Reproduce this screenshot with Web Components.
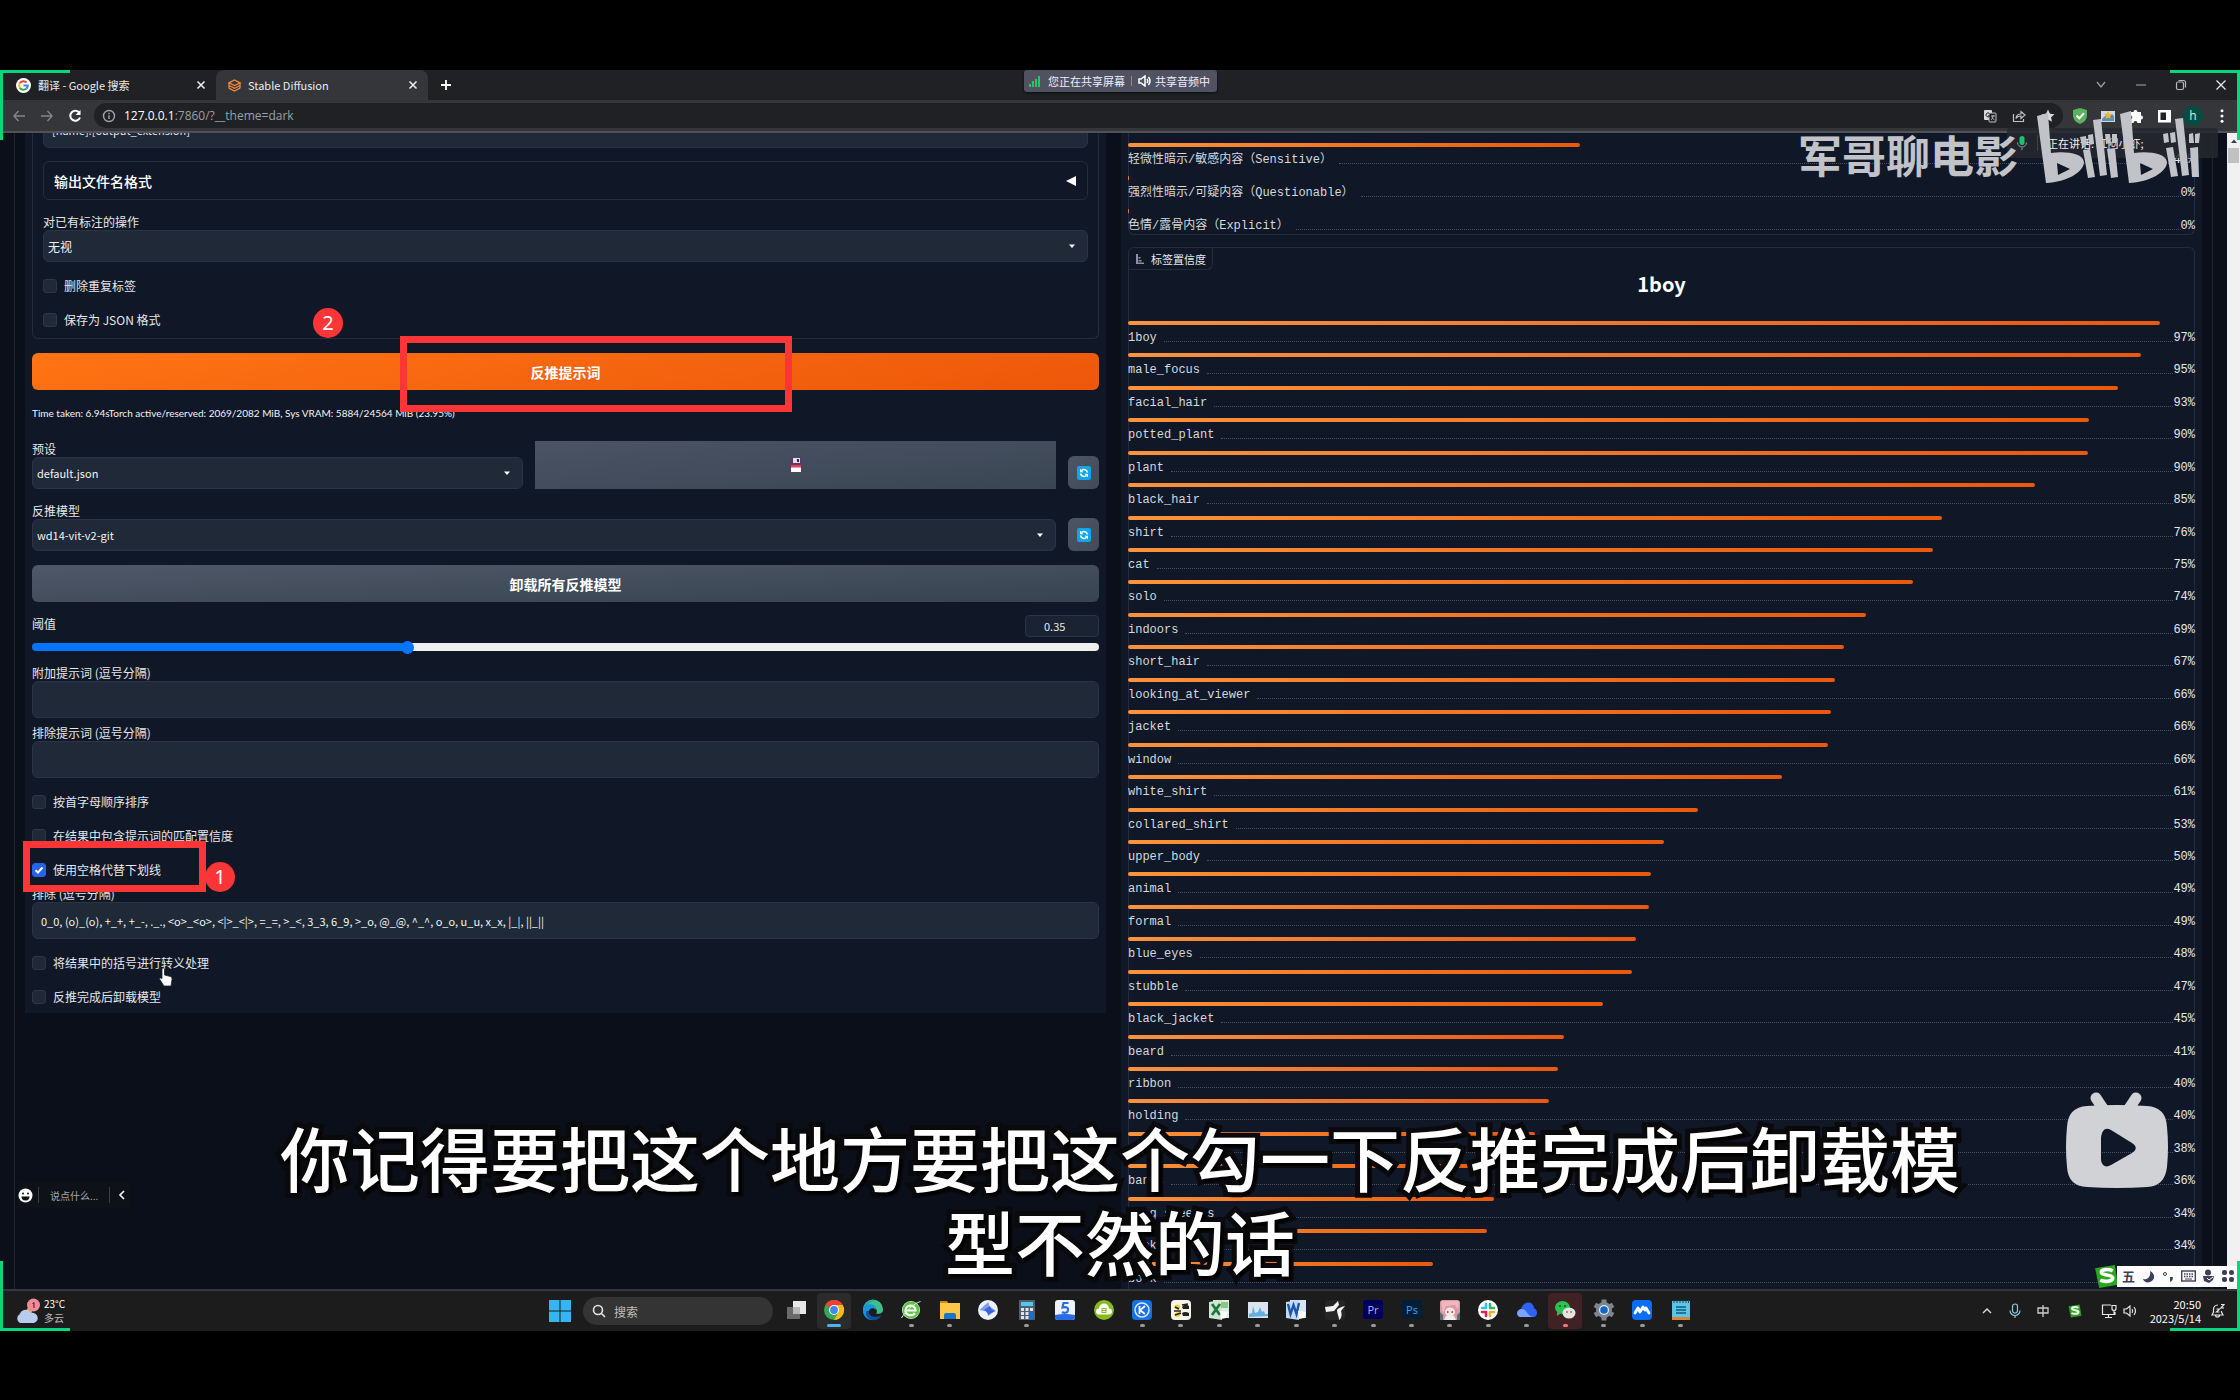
<!DOCTYPE html>
<html lang="zh-CN">
<head>
<meta charset="utf-8">
<title>Stable Diffusion</title>
<style>
html,body{height:100%;margin:0;background:#000}
body{font-family:"Noto Sans CJK SC","Noto Sans",sans-serif;font-size:12px;color:#e5e7eb}
</style>
</head>
<body>
<shared-desktop></shared-desktop>
<script>
const base = `*{box-sizing:border-box}button,input,select{font:inherit;color:inherit;margin:0}button{cursor:pointer;border:0;background:none;padding:0}svg{display:block;flex:none}`;
function define(name, css, html){
  customElements.define(name, class extends HTMLElement{
    connectedCallback(){
      if(this.shadowRoot) return;
      const root = this.attachShadow({mode:'open'});
      root.innerHTML = `<style>${base}${css}</style>` + (typeof html === 'function' ? html(this) : html);
    }
  });
}
let uid = 0;

/* ---------- browser chrome ---------- */
define('browser-tab', `
:host{display:flex;align-items:center;height:30px;width:212px;padding:0 8px 0 12px;gap:7px;color:#e8eaed;font:11px/16px "Noto Sans CJK SC",sans-serif}
:host([active]){background:#35363a;border-radius:8px 8px 0 0}
span{flex:1;white-space:nowrap}
button{width:14px;height:14px}`,
`<slot name="icon"></slot><span><slot></slot></span><button aria-label="关闭标签页"><svg width="14" height="14" viewBox="0 0 14 14" stroke="#e8eaed" stroke-width="1.6"><path d="M3.5 3.5l7 7M10.500 3.500l-7 7"/></svg></button>`);

define('browser-tabs', `
:host{display:flex;align-items:center;height:30px;background:#202124;padding-left:4px}
.win{margin-left:auto;display:flex;gap:24px;padding-right:11px}
.new{width:16px;height:16px;margin-left:10px}`,
`<browser-tab>翻译 - Google 搜索<svg slot="icon" width="15" height="15" viewBox="0 0 15 15"><circle cx="7.500" cy="7.500" r="7.500" fill="#fff"/><g fill="none" stroke-width="2"><path d="M3.800 5.300A4.300 4.300 0 0 1 10.600 4.500" stroke="#ea4335"/><path d="M3.800 5.300A4.300 4.300 0 0 0 3.800 9.700" stroke="#fbbc05"/><path d="M3.800 9.700A4.300 4.300 0 0 0 10.400 10.600" stroke="#34a853"/><path d="M7.500 7.500h4.300a4.300 4.300 0 0 1-1.400 3.100" stroke="#4285f4"/></g></svg></browser-tab>
<browser-tab active>Stable Diffusion<svg slot="icon" width="13" height="13" viewBox="0 0 13 13" fill="none" stroke="#f08a3c" stroke-width="1.300"><path d="M6.500 1L12 3.800 6.500 6.600 1 3.800zM1 6.500l5.500 2.800L12 6.500M1 9.200L6.500 12 12 9.200M1 3.800v5.400M12 3.800v5.400"/></svg></browser-tab>
<button class="new" aria-label="新标签页"><svg width="16" height="16" viewBox="0 0 16 16" stroke="#fff" stroke-width="1.800"><path d="M8 3v10M3 8h10"/></svg></button>
<div class="win">
<button aria-label="搜索标签页"><svg width="16" height="16" viewBox="0 0 16 16" fill="none" stroke="#9a9b9e" stroke-width="1.400"><path d="M4 5l4 5 4-5"/></svg></button>
<button aria-label="最小化"><svg width="16" height="16" viewBox="0 0 16 16" stroke="#aaa"><path d="M3 8h10"/></svg></button>
<button aria-label="还原"><svg width="16" height="16" viewBox="0 0 16 16" fill="none" stroke="#b8b8b8" stroke-width="1.200"><rect x="3.500" y="5" width="7" height="7.500" rx="1.500"/><path d="M5.500 3.500h5a2 2 0 0 1 2 2v5"/></svg></button>
<button aria-label="关闭"><svg width="16" height="16" viewBox="0 0 16 16" stroke="#e8e8e8" stroke-width="1.300"><path d="M3.500 3.500l9 9M12.500 3.500l-9 9"/></svg></button>
</div>`);

define('browser-toolbar', `
:host{display:flex;align-items:center;height:33px;background:#35363a;border-bottom:2px solid #505257;padding:0 9px 0 11px}
.nav{display:flex;gap:12px;margin-right:11px}
.bar{flex:1;height:25px;border-radius:13px;background:#202124;display:flex;align-items:center;padding:0 7px 0 8px;gap:8px;font:12px/16px "Open Sans","Noto Sans",sans-serif}
.url{flex:1;color:#9aa0a6;white-space:nowrap}
.url b{color:#fff;font-weight:400}
.ic{display:flex;gap:13px}
.ext{display:flex;align-items:center;gap:10px;margin-left:8px}
.me{width:20px;height:20px;border-radius:50%;background:#024f41;color:#e8e8e8;font:12px/20px "Open Sans",sans-serif;text-align:center}`,
`<div class="nav">
<button aria-label="后退"><svg width="16" height="16" viewBox="0 0 16 16" fill="none" stroke="#85868a" stroke-width="1.400"><path d="M14 8H3M7.500 3L3 8l4.500 5"/></svg></button>
<button aria-label="前进"><svg width="16" height="16" viewBox="0 0 16 16" fill="none" stroke="#85868a" stroke-width="1.400"><path d="M2 8h11M8.500 3L13 8l-4.500 5"/></svg></button>
<button aria-label="刷新"><svg width="16" height="16" viewBox="0 0 16 16" fill="none" stroke="#fff" stroke-width="2"><path d="M12.500 5A5 5 0 1 0 13 9.500"/><path d="M13.500 2v5h-5z" fill="#fff" stroke="none"/></svg></button></div>
<div class="bar"><svg width="14" height="14" viewBox="0 0 14 14" fill="none" stroke="#a0a3a8" stroke-width="1.400"><circle cx="7" cy="7" r="5.500"/><path d="M7 6.200V10M7 3.800v1.400"/></svg>
<span class="url"><b>127.0.0.1</b>:7860/?__theme=dark</span>
<div class="ic">
<svg width="16" height="16" viewBox="0 0 16 16"><rect x="2" y="2" width="8" height="10" rx="1" fill="#d8dadd"/><rect x="7" y="5" width="7" height="9" rx="1" fill="#202124" stroke="#c0c2c6"/><path d="M7.500 5.500a2 2 0 1 0 .3 2.300H6" fill="none" stroke="#202124"/><path d="M9 8h4M11 7v1c0 2-1 3-2 4M10 9c.5 1.500 1.500 2.500 2.500 3" fill="none" stroke="#c0c2c6" stroke-width=".9"/></svg>
<svg width="16" height="16" viewBox="0 0 16 16" fill="none" stroke="#c0c2c6" stroke-width="1.200"><path d="M2.500 6v7.500h10V11"/><path d="M5 10.500c.3-3 2-4.500 5-4.500V3.500L14 7l-4 3.500V8c-2.500 0-4 .8-5 2.500z"/></svg>
<svg width="16" height="16" viewBox="0 0 16 16" fill="#d9dadc"><path d="M8 1.500l1.900 4.200 4.600.5-3.400 3.100.9 4.500L8 11.500l-4 2.300.9-4.500L1.500 6.200l4.600-.5z"/></svg></div></div>
<div class="ext">
<svg width="18" height="18" viewBox="0 0 18 18"><path d="M9 1l7 2v5c0 4.500-3 7.500-7 9-4-1.500-7-4.500-7-9V3z" fill="#58b35c"/><path d="M5.500 8.500l2.800 2.800 4.700-5" fill="none" stroke="#fff" stroke-width="2"/></svg>
<svg width="18" height="18" viewBox="0 0 18 18"><rect x="2" y="4" width="14" height="11" fill="#cfd9e3"/><path d="M3 12l4-4 3 2 3-3 2 2v5H3z" fill="#5f8fae"/><path d="M9 4l1.200 2.600 2.800.4-2 2 .5 2.800L9 10.500l-2.500 1.300.5-2.800-2-2 2.800-.4z" fill="#f3b62b"/></svg>
<svg width="18" height="18" viewBox="0 0 18 18" fill="#fff"><path d="M3 5h3.500a2 2 0 1 1 4 0H14v3.500a2 2 0 1 1 0 4V16h-3.500a2 2 0 1 0-4 0H3v-3.800a1.900 1.900 0 1 0 0-3.700z"/></svg>
<svg width="18" height="18" viewBox="0 0 18 18"><path d="M3 3h13v12.500H3z" fill="#fff"/><path d="M5.500 5.500h5.500v7.500H5.500z" fill="#202124"/></svg>
<div class="me">h</div>
<svg width="18" height="18" viewBox="0 0 18 18" fill="#fff"><circle cx="9" cy="3.800" r="1.500"/><circle cx="9" cy="9" r="1.500"/><circle cx="9" cy="14.200" r="1.500"/></svg></div>`);

/* ---------- form parts ---------- */
define('form-select', `
:host{display:block}
label{display:block;height:16px;line-height:16px;white-space:nowrap}
.box{position:relative}
select{display:block;width:100%;height:32px;appearance:none;border:1px solid #293446;border-radius:6px;background:#1f2937;padding:0 4px;color:#f3f4f6;font-size:11px}
:host(:lang(zh-Hans)) select{font-size:12px}
svg{position:absolute;right:12px;top:12px;pointer-events:none}`,
e=>{const id='s'+(++uid);return `<label for="${id}">${e.getAttribute('label')}</label><div class="box"><select id="${id}"><option>${e.getAttribute('value')}</option></select><svg width="8" height="8" viewBox="0 0 8 8" fill="#fff"><path d="M1 2.500h6L4 6z"/></svg></div>`});

define('form-text', `
:host{display:block}
label{display:block;height:16px;line-height:16px;white-space:nowrap}
input{display:block;width:100%;height:37px;border:1px solid #293446;border-radius:6px;background:#1f2937;padding:0 8px;color:#f3f4f6;font-size:11px;outline:0}`,
e=>{const id='t'+(++uid);return `<label for="${id}">${e.getAttribute('label')}</label><input type="text" id="${id}" value="${(e.getAttribute('value')||'').replace(/</g,'&lt;')}">`});

define('form-check', `
:host{display:flex}
label{display:flex;align-items:center;gap:7px;height:16px;line-height:16px;white-space:nowrap}
input{appearance:none;width:14px;height:14px;border:1px solid #2c3647;border-radius:3px;background:#1f2937}
input:checked{border-color:#2563eb;background:#2563eb}
.k{position:relative;display:flex}.k svg{position:absolute;left:1px;top:1px;display:none;pointer-events:none}
input:checked + svg{display:block}`,
e=>{const id='c'+(++uid);return `<label for="${id}"><span class="k"><input type="checkbox" id="${id}" ${e.hasAttribute('checked')?'checked':''}><svg width="12" height="12" viewBox="0 0 12 12" fill="none" stroke="#fff" stroke-width="2"><path d="M2.500 6.200L5 8.500 9.500 3.500"/></svg></span><slot></slot></label>`});

define('refresh-button', `
:host{display:block;width:31px}
button{width:31px;height:33px;border-radius:6px;background:linear-gradient(135deg,#4b5563,#414b59);display:grid;place-items:center}`,
`<button aria-label="刷新"><svg width="14" height="14" viewBox="0 0 14 14"><rect width="14" height="14" rx="2" fill="#12a5ea"/><path d="M10.500 6.500A3.700 3.700 0 0 0 4.500 4.500M3.500 7.500a3.700 3.700 0 0 0 6 2" fill="none" stroke="#fff" stroke-width="1.500"/><path d="M3 2.800v3.400h3.400zM11 11.200V7.800H7.600z" fill="#fff"/></svg></button>`);

define('tagger-form', `
:host{display:block;background:#101827;padding:0 7px 8px}
.group{border:1px solid #232c3c;border-top:0;border-radius:0 0 6px 6px;padding:0 10px 10px}
.prev{display:block;width:100%;height:37px;margin-top:-22px;border:1px solid #293446;border-radius:6px;background:#1f2937;padding:0 8px;color:#e5e7eb;font-size:11px}
.acc{display:flex;justify-content:space-between;align-items:center;width:100%;height:39px;margin-top:13px;border:1px solid #232d3d;border-radius:6px;padding:0 10px;font-size:14px;line-height:20px;font-weight:500;color:#fff}
.main,.sec{display:block;width:100%;height:37px;border-radius:6px;font-size:14px;font-weight:700;color:#fff}
.main{margin-top:14px;background:linear-gradient(170deg,#ff7414,#ec570a)}
.sec{margin-top:14px;background:linear-gradient(to bottom right,#4f5868,#374350)}
.time{margin:15px 0 0;font:10px/16px Lato,"Noto Sans CJK SC",sans-serif;color:#f3f4f6;white-space:nowrap}
.row{display:grid;gap:12px;align-items:end}
.r1{margin-top:20px;grid-template-columns:491fr 521fr 31px}
.r2{margin-top:14px;grid-template-columns:1fr 31px}
.save{align-self:stretch;display:grid;place-items:center;background:linear-gradient(to bottom right,#4b5365,#3a4653)}
.th{display:flex;justify-content:space-between;align-items:flex-start;margin-top:13px;height:22px;line-height:18px}
.th input{width:74px;height:22px;border:1px solid #293446;border-radius:4px;background:#1a2332;padding:0 18px;font-size:11px;appearance:textfield;outline:0}
.th input::-webkit-inner-spin-button{display:none}
.range{display:block;width:100%;height:8px;margin:6px 0 0;appearance:none;border-radius:4px;background:linear-gradient(to right,#0075ff 35.500%,#efefef 35.500%)}
.range::-webkit-slider-thumb{appearance:none;width:13px;height:13px;border-radius:50%;background:#0075ff}
.m16{margin-top:16px}.m18{margin-top:18px}.m14{margin-top:14px}.m7{margin-top:7px}.m8{margin-top:8px}`,
`<div class="group">
<input class="prev" aria-label="输出文件名" value="[name].[output_extension]">
<button class="acc"><span>输出文件名格式</span><svg width="12" height="12" viewBox="0 0 12 12" fill="#fff"><path d="M11 1v10L1 6z"/></svg></button>
<form-select class="m14" lang="zh-Hans" label="对已有标注的操作" value="无视"></form-select>
<form-check class="m16">删除重复标签</form-check>
<form-check class="m18">保存为 JSON 格式</form-check>
</div>
<button class="main">反推提示词</button>
<p class="time">Time taken: 6.94sTorch active/reserved: 2069/2082 MiB, Sys VRAM: 5884/24564 MiB (23.95%)</p>
<div class="row r1"><form-select lang="en" label="预设" value="default.json"></form-select>
<button class="save" aria-label="保存"><svg width="14" height="16" viewBox="0 0 14 16"><path d="M1 1h11l1 1v13H1z" fill="#5b3a68"/><path d="M4 1h7v5H4z" fill="#e4dcec"/><path d="M8 2h2v3H8z" fill="#3a2347"/><path d="M2 8h10v7H2z" fill="#fff"/><path d="M2 8h10v2.500H2z" fill="#e0405a"/></svg></button>
<refresh-button></refresh-button></div>
<div class="row r2"><form-select lang="en" label="反推模型" value="wd14-vit-v2-git"></form-select><refresh-button></refresh-button></div>
<button class="sec">卸载所有反推模型</button>
<div class="th"><label for="num">阈值</label><input id="num" type="number" value="0.35" step="0.01"></div>
<input class="range" type="range" min="0" max="1" step="0.01" value="0.35" aria-label="阈值">
<form-text class="m14" label="附加提示词 (逗号分隔)"></form-text>
<form-text class="m7" label="排除提示词 (逗号分隔)"></form-text>
<form-check class="m16">按首字母顺序排序</form-check>
<form-check class="m18">在结果中包含提示词的匹配置信度</form-check>
<form-check class="m18" checked>使用空格代替下划线</form-check>
<form-text class="m8" label="排除 (逗号分隔)" value="0_0, (o)_(o), +_+, +_-, ._., &lt;o&gt;_&lt;o&gt;, &lt;|&gt;_&lt;|&gt;, =_=, &gt;_&lt;, 3_3, 6_9, &gt;_o, @_@, ^_^, o_o, u_u, x_x, |_|, ||_||"></form-text>
<form-check class="m16">将结果中的括号进行转义处理</form-check>
<form-check class="m18">反推完成后卸载模型</form-check>`);

/* ---------- results ---------- */
define('score-row', `
:host{display:block;font:12px/16px "Liberation Mono","Noto Sans CJK SC",monospace}
i{display:block;height:4px;border-radius:2px;min-width:1px;background:linear-gradient(to right,#fb923c,#ea580c);width:var(--w)}
div{display:flex;align-items:center;height:16px;margin-top:5px;white-space:nowrap;color:#d6d9de}
hr{flex:1;border:0;border-bottom:1px dotted #465063;margin:7px 0 0 7px}
b{font-weight:400;color:#e5e7eb}`,
e=>{const [n,p,w]=e.getAttribute('data').split('|');e.style.setProperty('--w',w+'%');return `<i></i><div><span>${n}</span><hr><b>${p}%</b></div>`});

const tags = `1boy|97|96.7,male_focus|95|94.9,facial_hair|93|92.8,potted_plant|90|90.1,plant|90|90,black_hair|85|85,shirt|76|76.3,cat|75|75.4,solo|74|73.6,indoors|69|69.2,short_hair|67|67.1,looking_at_viewer|66|66.3,jacket|66|65.9,window|66|65.6,white_shirt|61|61.3,collared_shirt|53|53.4,upper_body|50|50.2,animal|49|49,formal|49|48.8,blue_eyes|48|47.6,stubble|47|47.2,black_jacket|45|44.5,beard|41|40.9,ribbon|40|40.3,holding|40|39.5,cup|38|38.1,bangs|36|35.8,long_sleeves|34|34.3,bookshelf|34|33.6,book|29|28.6`.split(',');
define('result-panel', `
:host{display:flex;flex-direction:column;background:#101827;padding:0 7px;min-height:0;overflow:hidden}
.rating{display:grid;gap:8px;padding:10px 0 0;border:1px solid #232c3c;border-width:0 1px 1px;border-radius:0 0 6px 6px}
.rating score-row{margin:0 -1px}
.chart{flex:1;min-height:0;display:flex;flex-direction:column;margin-top:12px;border:1px solid #232c3c;border-bottom:0;border-radius:6px 6px 0 0}
.chip{align-self:flex-start;display:flex;align-items:center;gap:6px;height:22px;padding:0 6px;border:1px solid #232d3d;border-width:0 1px 1px 0;border-radius:0 0 6px 0;font-size:11px}
h2{margin:0;font-size:20px;line-height:28px;font-weight:700;text-align:center;color:#fff}
.list{flex:1;min-height:0;display:grid;grid-auto-rows:1fr;margin:23px -1px -5px}`,
`<div class="rating"><score-row data="轻微性暗示/敏感内容（Sensitive）|42|42.4"></score-row><score-row data="强烈性暗示/可疑内容（Questionable）|0|0"></score-row><score-row data="色情/露骨内容（Explicit）|0|0"></score-row></div>
<div class="chart"><div class="chip"><svg width="10" height="10" viewBox="0 0 10 10" fill="#8c93a0"><path d="M1 0h2v10H1zM3.500 3h2v1.500h-2zM3.500 6h3v1.500h-3zM3 8.500h6V10H3z"/></svg>标签置信度</div><h2>1boy</h2><div class="list">${tags.map(t=>`<score-row data="${t}"></score-row>`).join('')}</div></div>`);

define('web-page', `
:host{display:flex;min-height:0;overflow:hidden;background:#0b0f19}
.page{flex:1;min-width:0;padding:0 14px;display:flex}
.wrap{flex:1;min-width:0;min-height:0;border:1px solid #1d2432;border-width:0 1px;padding:0 10px;display:grid;grid-template-columns:minmax(0,1fr) minmax(0,1fr);grid-template-rows:minmax(0,1fr);gap:15px}
tagger-form{align-self:start}
.sb{width:13px;background:#f1f1f1;padding-top:4px;display:flex;flex-direction:column;align-items:center}
.sb i{width:11px;height:15px;margin-top:3px;background:#c1c1c1}`,
`<div class="page"><div class="wrap"><tagger-form></tagger-form><result-panel></result-panel></div></div><div class="sb"><svg width="8" height="8" viewBox="0 0 8 8" fill="#404040"><path d="M1 6h6L4 2.500z"/></svg><i></i></div>`);

/* ---------- taskbar ---------- */
const icons = [
 ['任务视图','','<path d="M8 2h13v13H8z" fill="#e8e8e8"/><path d="M2 8h13v12H2z" fill="#6a6a6a"/><path d="M8 8h7v7H8z" fill="#b8b8b8"/>'],
 ['Chrome','on','<circle cx="11" cy="11" r="10" fill="#34a853"/><path d="M11 11L2.300 6A10 10 0 0 1 19.700 6z" fill="#ea4335"/><path d="M11 1a10 10 0 0 1 8.700 5H11z" fill="#ea4335"/><path d="M11 6h8.700A10 10 0 0 1 11 21l4.300-7.500z" fill="#fbbc05"/><circle cx="11" cy="11" r="5" fill="#fff"/><circle cx="11" cy="11" r="3.900" fill="#4285f4"/>'],
 ['Edge','','<path d="M1 11a10 10 0 0 1 20-1c.5 4-3 5.500-7 4.500 1-1 1-1.500.8-2.500 0-4-7-6-11-2C2.500 11 1.500 13 1 11z" fill="#3cc08a"/><path d="M1 11C2 4 9 0 14 2c-5 0-8 2-9 4 4-2 10 1 9.800 6C14 9 8 8 7 12c-1 4 4 8 10 6.500-3 3-8 3.500-12 1A10 10 0 0 1 1 11z" fill="#1a93dd"/><path d="M7 12c-1 5 5 7.500 12.500 4.500-3 5-9 6-13 3-4-4-3-9 .5-7.500z" fill="#0c4f9e"/>'],
 ['浏览器','dot','<circle cx="11" cy="11" r="9" fill="#eef9ea"/><circle cx="11" cy="11" r="8.500" fill="#5cc545"/><path d="M5.500 11.500h10c0-6.500-10-6.500-10 .3 0 5 7 5.500 9.500 2.500" fill="none" stroke="#fff" stroke-width="2.200"/><path d="M1.500 19C4 14 14 4 20.500 2.500" stroke="#d8f5d0" fill="none"/>'],
 ['文件资源管理器','dot','<path d="M1 2h7l2 3H1z" fill="#c98a15"/><path d="M1 4h20v16H1z" fill="#fcc845"/><path d="M5 20v-4q0-2 2-2h8q2 0 2 2v4z" fill="#1a76c8"/>'],
 ['迅雷','','<circle cx="11" cy="11" r="10" fill="#eef0fa"/><path d="M2.500 11C6 8 8 5 12 3c-1 3 1 5 3 6l4 3c-3 1-5 3-8 5 0-3-2-5-4-5z" fill="#7d9df0"/><path d="M7 11l6-4c0 2 2 4 5 5-3 1-5 3-7 4 0-2-1-4-4-5z" fill="#3f63dc"/>'],
 ['计算器','dot','<rect x="3" y="1" width="16" height="20" rx="1" fill="#50606e"/><path d="M5 3h12v4H5z" fill="#52c6ee"/><path d="M5 9h3v3H5zM9.500 9h3v3h-3zM5 13h3v3H5zM9.500 13h3v3h-3zM5 17h3v3H5zM9.500 17h3v3h-3z" fill="#dfe5ea"/><path d="M14 9h3v3h-3z" fill="#dfe5ea"/><path d="M14 13h3v7h-3z" fill="#1673c9"/>'],
 ['五笔','','<rect x="1" y="1" width="20" height="20" rx="3" fill="#eef2fb"/><path d="M1 16q10-2 20 0v2q0 3-3 3H4q-3 0-3-3z" fill="#2a6be8"/><path d="M14.500 4H9.500L8.500 8.500c4-1 6 0 5.500 3-.5 2.500-4 3-6 1.500" fill="none" stroke="#2a6be8" stroke-width="2.200"/>'],
 ['云','','<circle cx="11" cy="11" r="10" fill="#86ba1e"/><path d="M6 15.500a3 3 0 0 1 0-6 5 5 0 0 1 10 0 3 3 0 0 1 0 6z" fill="#fff"/><rect x="8.500" y="9" width="5" height="5" fill="#86ba1e"/><path d="M9.500 10.500h3M9.500 12.500h3" stroke="#fff"/>'],
 ['K','dot','<rect x="1" y="1" width="20" height="20" rx="4" fill="#1671e6"/><circle cx="11" cy="11" r="7" fill="none" stroke="#dbe9ff" stroke-width="1.500"/><path d="M8.500 7v8M14 7l-5 4.300L14 15" fill="none" stroke="#fff" stroke-width="1.800"/>'],
 ['蜜蜂','dot','<rect x="1" y="1" width="20" height="20" rx="4" fill="#f7f5ea"/><path d="M4 9q1-5 5-3 3 2-1 5zM4 16q3-5 7-2 0 4-5 4z" fill="#f3cf2f"/><path d="M12 8q3-4 7-1v3h-6zM12 14q3-2 7 0v3h-6z" fill="#222"/><path d="M4 12h7M5 16l6-2M12 6l6-1M5 8l4 2" stroke="#222" stroke-width="1.500"/>'],
 ['Excel','dot','<path d="M5 1h16v18H5z" fill="#dcefdc"/><path d="M1 3l13-2v20L1 19z" fill="#cfe6cf"/><path d="M13 3h7v6h-7z" fill="#8dc58d"/><path d="M4 5l8 11M12 5L4 16" stroke="#1e7a3c" stroke-width="2.800"/><path d="M12 12l8 1-2 6-5 1z" fill="#fff"/>'],
 ['性能','dot','<path d="M1 3h20v16H1z" fill="#dbe4ec"/><path d="M2 18v-3l3-1 1-7 2 7 3-1 2-5 2 5 2-1 1 3 3 0v2z" fill="#62b0e2"/>'],
 ['Word','dot','<path d="M5 1h16v18H5z" fill="#d7e5f7"/><path d="M1 3l13-2v20L1 19z" fill="#c4d9f3"/><path d="M3 5l2.500 10L8.500 6l3 9L14 4" fill="none" stroke="#1c56a8" stroke-width="2.400"/><path d="M13 12l8 1-2 6-5 1z" fill="#fff"/>'],
 ['剪映','dot','<rect x="1" y="1" width="20" height="20" rx="3" fill="#262626"/><path d="M1 8l8-1 5-5 1 4-5 6-8 1zM21 7c-4 1-7 2-8 4 0 4 2 6 2 10 3-2 3-6 2-9z" fill="#f4f4f4"/>'],
 ['Pr','dot','<rect x="1" y="1" width="20" height="19" rx="3" fill="#00005b"/><text x="11" y="15" font-size="11" font-family="Open Sans,sans-serif" text-anchor="middle" fill="#c9a8ff">Pr</text>'],
 ['Ps','dot','<rect x="1" y="1" width="20" height="19" rx="3" fill="#001e36"/><text x="11" y="15" font-size="11" font-family="Open Sans,sans-serif" text-anchor="middle" fill="#31a8ff">Ps</text>'],
 ['头像','dot','<rect x="1" y="1" width="20" height="20" rx="3" fill="#d79aa6"/><path d="M2 2h18l-1 9-3-5-9 1-3 8z" fill="#f0b7c0"/><ellipse cx="11" cy="13" rx="5" ry="4.500" fill="#fbe5df"/><path d="M8 13h1.500M12.500 13H14" stroke="#833" stroke-width="1.500"/><path d="M7 17h8l2 4H5z" fill="#f3f0f0"/><path d="M1 13l3 3v5H1zM21 13l-3 3v5h3z" fill="#5a6c74"/>'],
 ['Slack','dot','<circle cx="11" cy="11" r="10" fill="#fff"/><g stroke-width="2.600" stroke-linecap="round"><path d="M9 5v4M5 9h4" stroke="#36c5f0"/><path d="M13 5v4M13 9h4" stroke="#2eb67d"/><path d="M9 13v4M5 13h4" stroke="#e01e5a"/><path d="M13 13v4M13 13h4" stroke="#ecb22e"/></g>'],
 ['云盘','dot','<path d="M4 18c-4-1-4-7 1-8 2-8 12-9 13-1 4 2 4 8 0 9z" fill="#2f62f0"/><path d="M4 18c-4-1-4-7 1-8 6-1 6 8 13 8z" fill="#7aa3ff"/>'],
 ['微信','hot','<ellipse cx="8.500" cy="8.500" rx="7.500" ry="6.500" fill="#2bc24f"/><path d="M3 13l0 4 4-3z" fill="#2bc24f"/><circle cx="6" cy="7" r="1.100" fill="#145c27"/><circle cx="11" cy="7" r="1.100" fill="#145c27"/><ellipse cx="15" cy="14" rx="6.500" ry="5.500" fill="#e6e2df"/><circle cx="13" cy="13" r=".9" fill="#777"/><circle cx="17" cy="13" r=".9" fill="#777"/>'],
 ['设置','dot','<g stroke="#7d858e" stroke-width="5"><path d="M11 .5v21M1.900 5.800l18.200 10.400M20.100 5.800L1.900 16.200"/></g><circle cx="11" cy="11" r="8" fill="#7d858e"/><circle cx="11" cy="11" r="5" fill="#e8eef4"/><circle cx="11" cy="11" r="3.800" fill="#1466c4"/>'],
 ['会议','dot','<rect x="1" y="1" width="20" height="20" rx="4" fill="#0a6ef5"/><path d="M4 14l3-5 2 4 3-5 2 3 1-2 3 5" fill="none" stroke="#fff" stroke-width="2.800" stroke-linejoin="round" stroke-linecap="round"/>'],
 ['记事本','dot','<path d="M2 2h18v18H2z" fill="#5bc6e4"/><path d="M2 18h18v3H2z" fill="#d9843b"/><path d="M4 1v3M7 1v3M10 1v3M13 1v3M16 1v3M18.500 1v3" stroke="#1c4b66"/><path d="M6 8h10M6 11h10M6 14h10" stroke="#0d5b86" stroke-width="1.300"/>']
];
define('task-icon', `
:host{position:relative;display:flex;flex-direction:column;align-items:center;width:34px;height:36px;border-radius:4px;padding-top:6px;gap:3px}
:host([state=on]){background:#2b2b2b}
:host([state=hot]){background:#402224}
i{width:5px;height:3px;border-radius:2px}
:host([state=dot]) i{background:#999}
:host([state=on]) i{width:14px;background:#4cb4f0}
:host([state=hot]) i{background:#f77}`,
e=>{const d=icons[+e.getAttribute('n')];return `<button aria-label="${d[0]}"><svg width="22" height="22" viewBox="0 0 22 22">${d[2]}</svg></button><i></i>`});

const sogou = (s)=>`<svg width="${s}" height="${s}" viewBox="0 0 24 24"><path d="M1 4L20 1l3 19-18 3z" fill="#2aa51e"/><path d="M18 6.500c-4-2-11-1.500-11 1.500 0 3.500 11 1.500 11 5.500 0 3.500-8 4-12 2" fill="none" stroke="#fff" stroke-width="3.500"/></svg>`;
define('task-bar', `
:host{display:grid;grid-template-columns:549px 1149px 1fr;align-items:center;height:42px;background:#1c1c1c;border-top:2px solid #34373c;font-size:11px;line-height:15px;color:#fff}
.w{display:flex;align-items:center;gap:4px;padding-left:15px;font-size:10px;line-height:14px}
.w span{color:#bbb}
.mid{display:flex;align-items:center;height:36px}
.start{margin-right:12px}
.search{display:flex;flex:none;align-items:center;gap:8px;width:190px;height:28px;border-radius:14px;background:#343434;padding:0 9px;margin-right:6px}
.search input{border:0;background:none;width:120px;font-size:12px;padding:0;outline:0}
.search input::placeholder{color:#bdbdbd;opacity:1}
.apps{flex:1;display:flex;justify-content:space-between}
.tray{display:flex;align-items:center;justify-content:flex-end;padding-right:15px}
.t{text-align:right;margin:0 9px 0 12px;font:11px/14px "Noto Sans CJK SC",sans-serif}`,
`<div class="w"><svg width="25" height="26" viewBox="0 0 25 26"><path d="M3 15a8 8 0 0 0 10-9c5 3 5 9 2 13z" fill="#f3a52a"/><path d="M5 25a5 5 0 0 1 0-9 6 6 0 0 1 11-1 5 5 0 0 1 3 10z" fill="#b8ccf0"/><circle cx="18.500" cy="7" r="6.500" fill="#f28a97"/><path d="M17.500 5.500l1.500-1v5.500" stroke="#401a20" fill="none"/></svg><div>23°C<br><span>多云</span></div></div>
<div class="mid"><button class="start" aria-label="开始"><svg width="22" height="22" viewBox="0 0 22 22" fill="#35b5f2"><path d="M0 0h10.500v10.500H0zM11.500 0H22v10.500H11.500zM0 11.500h10.500V22H0zM11.500 11.500H22V22H11.500z"/></svg></button>
<label class="search"><svg width="14" height="14" viewBox="0 0 14 14" fill="none" stroke="#e5e5e5" stroke-width="1.600"><circle cx="6" cy="6" r="4.500"/><path d="M9.500 9.500L13 13"/></svg><input placeholder="搜索" aria-label="搜索"></label>
<div class="apps">${icons.map((d,i)=>`<task-icon n="${i}" state="${d[1]}"></task-icon>`).join('')}</div></div>
<div class="tray">
<svg width="12" height="12" viewBox="0 0 12 12" fill="none" stroke="#ddd" stroke-width="1.400"><path d="M2 8l4-4 4 4"/></svg>
<svg style="margin-left:15px" width="14" height="16" viewBox="0 0 14 16" fill="none" stroke="#8dc6de" stroke-width="1.200"><rect x="4.500" y="1" width="5" height="9" rx="2.500"/><path d="M2 7.500a5 5 0 0 0 10 0M7 12.500V15"/></svg>
<svg style="margin-left:14px" width="14" height="14" viewBox="0 0 14 14" fill="none" stroke="#ccc" stroke-width="1.300"><path d="M2 4h10v5H2zM7 1v12"/></svg>
<span style="margin-left:18px">${sogou(14)}</span>
<svg style="margin-left:19px" width="16" height="16" viewBox="0 0 16 16" fill="none" stroke="#e5e5e5" stroke-width="1.200"><path d="M10 2H1.500v9.500H14V9M4 14.500h7M7.500 11.500v3M11 2.500h4v3a2 2 0 0 1-4 0zM13 7.500V12"/></svg>
<svg style="margin-left:6px" width="15" height="14" viewBox="0 0 15 14" fill="none" stroke="#e5e5e5" stroke-width="1.200"><path d="M1 5h2.500L7 2v10L3.500 9H1zM9 5q1.500 2 0 4M11 3q3 4 0 8"/></svg>
<div class="t">20:50<br>2023/5/14</div>
<svg width="15" height="16" viewBox="0 0 15 16" fill="none" stroke="#e5e5e5" stroke-width="1.200"><path d="M8 2C5 2 3.500 4 3.500 6.500V9L2 12h11l-1.500-3V8M5.500 12a2 2 0 0 0 4 0M6.500 6h3l-3 3h3M11 1.500h3L11 5h3"/></svg></div>`);

/* ---------- overlays ---------- */
define('share-status', `
:host{display:flex;align-items:center;height:22px;width:193px;padding:0 5px;gap:8px;border-radius:3px;background:#50525f;color:#eef;font-size:11px;line-height:16px;white-space:nowrap;box-shadow:0 1px 3px #000a}
i{width:1px;height:10px;margin:0 -2px;background:#8a8c98}`,
`<svg width="11" height="11" viewBox="0 0 11 11" fill="#29c36c"><path d="M0 8h2v3H0zM3 5h2v6H3zM6 3h2v8H6zM9 0h2v11H9z"/></svg>您正在共享屏幕<i></i><svg style="margin-right:-4px" width="13" height="12" viewBox="0 0 13 12" fill="none" stroke="#fff" stroke-width="1.500"><path d="M1 4h2l4-3v10L3 8H1z"/><path d="M9 4q1.500 2 0 4M10.500 2q3 4 0 8"/></svg>共享音频中`);

define('speaker-status', `
:host{display:flex;align-items:center;height:30px;width:211px;padding:0 9px;gap:9px;border-radius:3px;background:#26282fd9;color:#f0f0f0;font-size:11px;white-space:nowrap}
i{width:1px;height:16px;background:#444}`,
`<svg width="12" height="16" viewBox="0 0 12 16"><rect x="3.500" y="1" width="5" height="9" rx="2.500" fill="#18c36a"/><path d="M1.500 7.500a4.500 4.500 0 0 0 9 0M6 12.500V15" fill="none" stroke="#999"/></svg><i></i>正在讲话: 红闷小虾;`);

define('bili-logo', `:host{display:block}`,
`<svg width="166" height="76" viewBox="0 0 166 76" fill="#c2c3c8"><path fill-rule="evenodd" d="M1 6L12 3l3 40c14-2 32 0 33 9 0 10-17 20-38 21zM21 53l1 12 12-6z"/><path fill-rule="evenodd" d="M84 4L95 1l3 42c14-2 32 0 33 9 0 10-17 20-38 21zM104 53l1 12 12-6z"/><path d="M44 27l6-1 1 9-5 1zM52 25l5-1 1 10-5 1zM47 40l7-1 5 28-7 1zM57 10l8-1 6 56-7 1zM69 24l5 0 1 9-5 1zM76 24l5 0 0 9-5 0zM71 39l8-1 3 29-7 1zM127 24l5-1 1 9-5 1zM134 23l5-1 1 10-5 1zM130 38l7-1 5 29-7 1zM139 9l8-1 6 57-7 1zM153 24l4-1 1 10-5 0zM159 24l5-1-1 10-4 0zM154 38l8-1 1 30-7 0z"/></svg>`);

define('tv-badge', `:host{display:block}`,
`<svg width="104" height="98" viewBox="0 0 104 98"><path d="M31 7l12 18M71 7L59 25" stroke="#d1d2d6" stroke-width="11" stroke-linecap="round"/><path fill="#d1d2d6" fill-rule="evenodd" d="M22 15Q52 13 82 15 101 16 102 36 104 56 102 76 100 95 82 96 52 98 22 96 3 95 2 76 0 56 2 36 3 16 22 15zM36 47v22c1 6 5 8 10 5l21-12c5-3 5-7 0-10L46 39c-5-3-9-1-10 8z"/></svg>`);

define('ime-bar', `
:host{display:flex;align-items:center;height:24px}
.b{display:flex;align-items:center;gap:7px;height:21px;margin-left:-2px;padding:0 3px 0 5px;background:#fdfdff;color:#3c3f58;font-size:13px;font-weight:700;line-height:20px}`,
`${sogou(25)}<div class="b"><span>五</span><svg width="13" height="13" viewBox="0 0 13 13" fill="#3c3f58"><path d="M8 1c5 2 6 9 0 11C5 13 2 12 1 9c5 1 8-3 7-8z"/></svg><svg width="12" height="13" viewBox="0 0 12 13"><circle cx="3" cy="4" r="1.500" fill="none" stroke="#3c3f58"/><path d="M8 7h3q0 4-3 5z" fill="#3c3f58"/></svg><svg width="15" height="12" viewBox="0 0 15 12"><rect x=".7" y="1" width="13.600" height="10" fill="none" stroke="#3c3f58" stroke-width="1.400"/><path d="M3 4h9M3 6.500h9" stroke="#3c3f58" stroke-width="1.300" stroke-dasharray="1.500 1"/><path d="M4 9h7" stroke="#3c3f58"/></svg><svg width="12" height="14" viewBox="0 0 12 14" fill="#3c3f58"><circle cx="5" cy="3.500" r="3"/><path d="M0 7h11l-1 4-4 3-5-2z"/><path d="M4 9l2 2 4-3" stroke="#fff" fill="none"/></svg><svg width="12" height="12" viewBox="0 0 12 12" fill="#3c3f58"><rect width="5" height="5" rx="2"/><rect x="7" width="5" height="5" rx="2.500"/><rect y="7" width="5" height="5" rx="2"/><rect x="7" y="7" width="5" height="5" rx="2"/></svg></div>`);

define('chat-bar', `
:host{display:flex;align-items:center;height:26px;width:112px;color:#a3a7ad;font-size:10px;background:#0e1117}
i{width:1px;height:16px;background:#3a3e45}
input{width:70px;border:0;background:none;padding:0 11px;font-size:10px;outline:0}
input::placeholder{color:#a3a7ad;opacity:1}`,
`<svg width="15" height="15" viewBox="0 0 15 15" style="margin-right:5px"><circle cx="7.500" cy="7.500" r="7" fill="#fff"/><path d="M3.500 8.500h8a4 4 0 0 1-8 0z" fill="#111"/><circle cx="5" cy="5.500" r="1" fill="#111"/><circle cx="10" cy="5.500" r="1" fill="#111"/></svg><i></i><input placeholder="说点什么..." aria-label="说点什么"><i></i><svg style="margin-left:7px" width="10" height="12" viewBox="0 0 10 12" fill="none" stroke="#fff" stroke-width="1.600"><path d="M7 2L3 6l4 4"/></svg>`);

define('step-mark', `
:host{display:block;width:30px;height:30px;border-radius:50%;background:#fc3636;color:#fff;font:20px/30px "Noto Sans","Open Sans",sans-serif;text-align:center}`, `<slot></slot>`);

define('caption-text', `
:host{display:block;text-align:center;color:#fff;font-size:70px;line-height:84px;font-weight:500;white-space:nowrap;-webkit-text-stroke:10px #0a0a0c;paint-order:stroke fill;text-shadow:3px 3px 2px #000}`, `<slot></slot>`);

define('shared-desktop', `
:host{display:grid;grid-template-rows:70px minmax(0,1fr) 69px;height:100vh;overflow:hidden}
.screen{grid-row:2;position:relative;display:grid;grid-template-rows:auto auto minmax(0,1fr) auto;min-width:0}
.o{position:absolute}
.red{border:7px solid #fc3636}
.g{width:70px;height:70px;border:0 solid #07d67b;pointer-events:none}
.wm{color:#c2c3c8;font-size:44px;line-height:50px;font-weight:700;white-space:nowrap}`,
`<div class="screen"><browser-tabs></browser-tabs><browser-toolbar></browser-toolbar><web-page></web-page><task-bar></task-bar>
<share-status class="o" style="left:1024px;top:0"></share-status>
<speaker-status class="o" style="right:22px;top:58px"></speaker-status>
<div class="o wm" style="right:222px;top:59px">军哥聊电影</div>
<bili-logo class="o" style="right:38px;top:40px"></bili-logo>
<tv-badge class="o" style="right:71px;top:1021px"></tv-badge>
<div class="o red" style="left:400px;top:266px;width:392px;height:76px"></div>
<step-mark class="o" style="left:313px;top:238px">2</step-mark>
<div class="o red" style="left:23px;top:771px;width:183px;height:51px"></div>
<step-mark class="o" style="left:205px;top:792px">1</step-mark>
<svg class="o" style="left:158px;top:897px" width="15" height="20" viewBox="0 0 15 20"><path d="M4 1.500c1-1 2.500-.5 2.500 1V8l6 1.500q2 .5 1.500 3L13 19H6L1.500 12c0-1 1-1.500 2.500-.5z" fill="#fff" stroke="#222" stroke-width=".8"/></svg>
<chat-bar class="o" style="left:18px;top:1112px"></chat-bar>
<ime-bar class="o" style="right:3px;bottom:43px"></ime-bar>
<caption-text class="o" style="left:0;right:0;top:1045px">你记得要把这个地方要把这个勾一下反推完成后卸载模<br>型不然的话</caption-text>
<div class="o g" style="left:0;top:0;border-width:3px 0 0 3px"></div>
<div class="o g" style="right:0;top:0;border-width:3px 3px 0 0"></div>
<div class="o g" style="left:0;bottom:0;border-width:0 0 3px 3px"></div>
<div class="o g" style="right:0;bottom:0;border-width:0 3px 3px 0"></div>
</div>`);
</script>
</body>
</html>
